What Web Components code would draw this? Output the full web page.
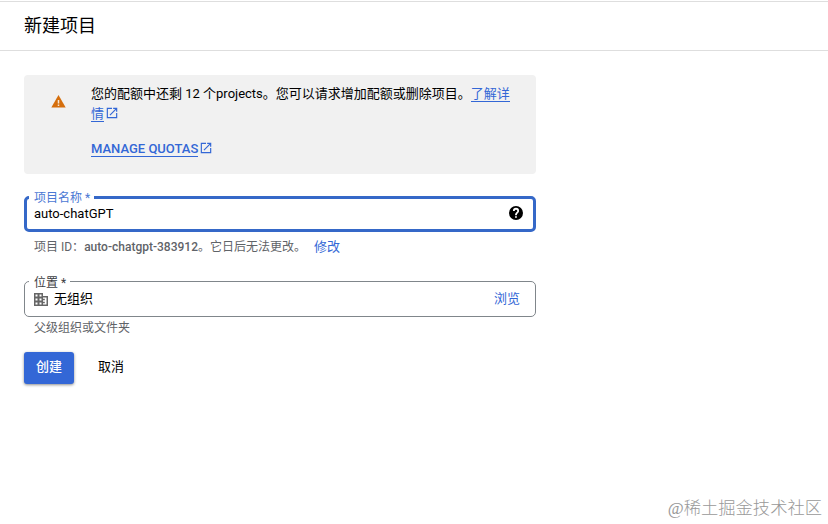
<!DOCTYPE html>
<html lang="zh-CN">
<head>
<meta charset="utf-8">
<title>新建项目</title>
<style>
  body {
    --blue: #3367d6;
    --line: #3568c8;
    margin: 0;
    background: #fff;
    color: #000;
    font: 13px/20px Roboto, "Noto Sans CJK SC", sans-serif;
  }
  b { font-weight: 500; }
</style>
</head>
<body>

<project-page>
  <page-header slot="header">新建项目</page-header>
  <quota-notice>
    您的配额中还剩 12 个projects。您可以请求增加配额或删除项目。<ext-link>了解详情</ext-link>
    <ext-link slot="action" strong>MANAGE QUOTAS</ext-link>
  </quota-notice>
  <form-field class="name" focused>
    <span slot="label">项目名称 *</span>
    <span>auto-chatGPT</span>
    <ui-icon slot="end" name="help"></ui-icon>
    <span slot="hint">项目 ID：<b>auto-chatgpt-383912</b>。它日后无法更改。</span>
    <text-button slot="hint" link>修改</text-button>
  </form-field>
  <form-field class="location">
    <span slot="label">位置 *</span>
    <ui-icon name="building"></ui-icon>
    <span>无组织</span>
    <text-button slot="end" link>浏览</text-button>
    <span slot="hint">父级组织或文件夹</span>
  </form-field>
  <text-button slot="actions" primary>创建</text-button>
  <text-button slot="actions">取消</text-button>
  <water-mark slot="mark">@稀土掘金技术社区</water-mark>
</project-page>

<script>
'use strict';

const define = (name, html) => {
  const template = document.createElement('template');
  template.innerHTML = html.trim();
  customElements.define(name, class extends HTMLElement {
    constructor() {
      super();
      this.attachShadow({ mode: 'open' }).appendChild(template.content.cloneNode(true));
    }
  });
};

const icons = {
  warning: '<svg width="15" height="15" viewBox="0 0 24 24"><path fill="#d56e0c" d="M.5 21.500h23L12 1.500z"/><path fill="#f8e5d2" d="M13.200 19h-2.400v-2.400h2.400zm0-4h-2.400V9.500h2.400z"/></svg>',
  open: '<svg width="14" height="14" viewBox="0 0 24 24"><path fill="#3367d6" d="M19 19H5V5h7V3H3v18h18v-9h-2zM14 3v2h3.600l-9.800 9.800 1.400 1.400L19 6.400V10h2V3z"/></svg>',
  help: '<svg width="16" height="16" viewBox="0 0 24 24"><path d="M12 1.500a10.500 10.500 0 1 0 0 21 10.500 10.500 0 0 0 0-21zm1.300 17.800h-2.700v-2.600h2.700zm2.400-8.100-1.100 1.100c-.9.9-1.300 1.600-1.300 3.200h-2.700v-.7c0-1.200.5-2.200 1.300-3l1.400-1.500c.4-.4.6-.9.6-1.400a1.900 1.900 0 0 0-3.800 0H7.400a4.600 4.600 0 0 1 9.200 0c0 .9-.4 1.700-.9 2.300z"/></svg>',
  // office tower with a lower wing on the right
  building: '<svg width="16" height="16" viewBox="0 0 16 16"><path fill="#666" fill-rule="evenodd" d="M0 1h9v3h5v10H0zM1.500 2.500V4.500h2V2.500zm4 0V4.500h2V2.500zM1.500 6.500v2h2v-2zm4 0v2h2v-2zM1.500 10.500v2h2v-2zm4 0v2h2v-2zM9 5.500v1.300h1.800v1.500H9v1.400h1.800v1.500H9v1.300h3.500v-7z"/></svg>'
};

customElements.define('ui-icon', class extends HTMLElement {
  constructor() {
    super();
    this.attachShadow({ mode: 'open' });
  }
  connectedCallback() {
    this.shadowRoot.innerHTML = `
      <style>
        :host { display: inline-flex; }
        :host([name=building]) { padding-top: 2px; }
        svg { display: block; }
      </style>
      ${icons[this.getAttribute('name')]}`;
  }
});

define('project-page', `
  <style>
    :host {
      box-sizing: border-box;
      display: flex;
      flex-direction: column;
      height: 524px;
      padding-top: 1px;
      overflow: hidden;
    }
    main {
      display: flex;
      flex-direction: column;
      width: 512px;
      padding: 24px 24px 0;
    }
    .actions {
      display: flex;
      gap: 12px;
      margin-top: 14px;
    }
    footer {
      display: flex;
      justify-content: flex-end;
      margin-top: auto;
    }
  </style>
  <slot name="header"></slot>
  <main>
    <slot></slot>
    <div class="actions"><slot name="actions"></slot></div>
  </main>
  <footer><slot name="mark"></slot></footer>
`);

define('page-header', `
  <style>
    :host {
      display: flex;
      box-sizing: border-box;
      align-items: center;
      height: 50px;
      padding-left: 24px;
      border-top: 1px solid #dedede;
      border-bottom: 1px solid #dedede;
      font-size: 18px;
      font-weight: 400;
    }
  </style>
  <slot></slot>
`);

define('quota-notice', `
  <style>
    :host {
      box-sizing: border-box;
      display: flex;
      height: 99px;
      padding: 9px 20px 0 26.500px;
      border-radius: 4px;
      background: #f1f1f1;
    }
    ui-icon { margin: 10px 25.500px 0 0; }
    .text { width: 425px; }
    .action { margin-top: 15px; }
  </style>
  <ui-icon name="warning"></ui-icon>
  <div class="text">
    <div><slot></slot></div>
    <div class="action"><slot name="action"></slot></div>
  </div>
`);

// no whitespace between the tags here, the link runs inline with its text
define('ext-link', `<style>
    :host { color: var(--blue); }
    :host([strong]) { font-weight: 500; }
    a { border-bottom: 1px solid; }
    ui-icon { margin-left: 1px; vertical-align: -2px; }
  </style><a><slot></slot></a><ui-icon name="open"></ui-icon>`);

define('form-field', `
  <style>
    :host { display: block; --w: 1px; --c: #80868b; --drop: 4px; }
    :host([focused]) { --w: 3px; --c: var(--line); --drop: 2px; }
    :host(.name) { margin-top: 22px; }
    :host(.location) { margin-top: 24px; }
    fieldset {
      box-sizing: border-box;
      display: block;
      min-width: 0;
      height: 36px;
      margin: 0;
      padding: 0 12px 0 calc(10px - var(--w));
      border: var(--w) solid var(--c);
      border-radius: 5px;
    }
    legend {
      height: var(--w);
      margin-left: -5px;
      padding: 0 4px 0 5px;
      color: #3c4043;
      font-size: 12px;
      line-height: calc(var(--w) + var(--drop));
      white-space: nowrap;
    }
    :host([focused]) legend { color: #4a78d4; }
    .row {
      display: flex;
      align-items: center;
      gap: 4px;
      height: 33px;
    }
    :host([focused]) .row { height: 29px; }
    .end { display: flex; margin-left: auto; }
    :host([focused]) .end { margin: -1px -3px 0 auto; }
    .hint {
      display: flex;
      gap: 8px;
      height: 20px;
      padding: 1px 0 0 10px;
      color: #5f6368;
      font-size: 12px;
    }
    :host([focused]) .hint { padding-top: 5px; }
    ::slotted([slot=hint]) { white-space: nowrap; }
  </style>
  <fieldset>
    <legend><slot name="label"></slot></legend>
    <div class="row"><slot></slot><span class="end"><slot name="end"></slot></span></div>
  </fieldset>
  <div class="hint"><slot name="hint"></slot></div>
`);

define('text-button', `
  <style>
    :host {
      box-sizing: border-box;
      display: inline-flex;
      align-items: center;
      justify-content: center;
      height: 32px;
      padding: 0 12px 2px;
      border-radius: 3px;
      font-size: 13px;
    }
    :host([link]) {
      height: 20px;
      padding: 0 3px 0 0;
      color: var(--blue);
    }
    :host([primary]) {
      background: var(--blue);
      box-shadow: 0 1px 3px rgba(0, 0, 0, .45);
      color: #fff;
      font-weight: 500;
    }
  </style>
  <slot></slot>
`);

define('water-mark', `
  <style>
    :host {
      padding: 0 6px 4px 0;
      color: #999;
      font: 300 17.300px/22px "Liberation Serif", "Noto Sans CJK SC", serif;
    }
  </style>
  <slot></slot>
`);
</script>
</body>
</html>
